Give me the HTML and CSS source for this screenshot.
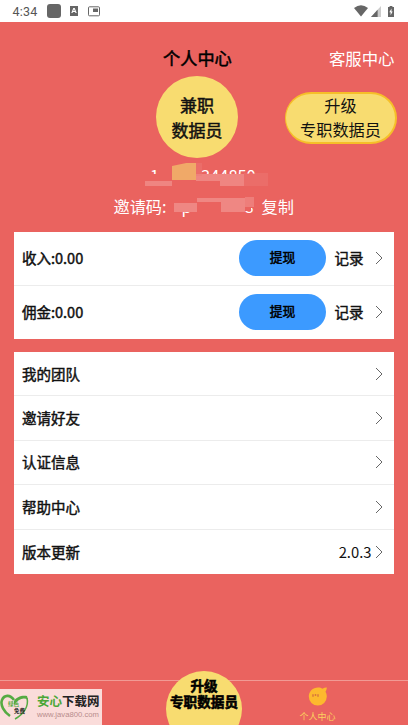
FILE: index.html
```html
<!DOCTYPE html>
<html lang="zh-CN">
<head>
<meta charset="utf-8">
<title>个人中心</title>
<link rel="stylesheet" href="styles.css">
</head>
<body>
<div class="app">
  <div class="status">
    <span class="clock">4:34</span>
    <span class="square"></span>
    <svg class="s-a" width="8" height="10" viewBox="0 0 8 10"><path fill="#666" fill-rule="evenodd" d="M0 0h8v10H0zM3.3 2L1.3 7h1.2l.4-1h2.200l.4 1h1.200l-2-5zM4 3.300l.7 1.700H3.300z"/></svg>
    <svg class="s-pip" width="12" height="11" viewBox="0 0 12 11"><rect x=".5" y=".8" width="11" height="9" rx="1" fill="none" stroke="#666"/><path fill="#666" d="M5 2.500h5v3.500H5z"/></svg>
    <span class="fill"></span>
    <svg width="14" height="12" viewBox="0 0 14 12"><path fill="#666" d="M0 3Q7-2.400 14 3L7 11.600z"/></svg>
    <svg class="s-sig" width="10" height="11" viewBox="0 0 10 11"><path fill="#ccc" d="M10 0v11H0z"/><path fill="#666" d="M6.600 3.700V11H0z"/></svg>
    <svg class="s-bat" width="6" height="11" viewBox="0 0 6 11"><path fill="#666" d="M1.600 0h2.800v1H6v10H0V1h1.600z"/><path fill="#fff" d="M3.500 2.500L1.300 6.300h1.300v3L4.700 5.400H3.500z"/></svg>
  </div>

  <header class="head">
    <h1>个人中心</h1>
    <a class="service">客服中心</a>
  </header>

  <section class="hero">
    <div class="role"><span>兼职</span><span>数据员</span></div>
    <div class="upgrade"><span>升级</span><span>专职数据员</span></div>
  </section>

  <div class="phone">
    <div class="digits"><span>1</span><span>344850</span></div>
    <svg class="mask" width="130" height="28" viewBox="0 0 130 28"><path fill="#ea635f" d="M5 11h120v15H5z"/><path fill="#ef8581" d="M5 18h27v5H5zM56 11h48v7H56zM80 17h24v6H80z"/><path fill="#ed7975" d="M56 0h6v13h-6zM104 10h24v13h-24z" opacity=".45"/><path fill="#f0a968" d="M32 3l19-4h5v18H32z"/></svg>
  </div>

  <div class="invite">
    <span>邀请码:</span>
    <div class="code">
      <span>p</span><span>8</span>
      <svg class="mask" width="90" height="24" viewBox="0 0 90 24"><path fill="#ea635f" d="M8 0h78v14H84v3H8z"/><path fill="#ef8783" d="M7 9h23v9H7zM30 4h50v4H30zM54 4h24v14H54z"/><path fill="#ee7e7a" d="M78 3h9v10h-9z"/></svg>
    </div>
    <span>复制</span>
  </div>

  <section class="card money">
    <div class="row"><b>收入:0.00</b><button>提现</button><b>记录</b><svg class="arrow" width="8" height="14" viewBox="0 0 8 14"><path d="M1 1l6 6-6 6"/></svg></div>
    <div class="row"><b>佣金:0.00</b><button>提现</button><b>记录</b><svg class="arrow" width="8" height="14" viewBox="0 0 8 14"><path d="M1 1l6 6-6 6"/></svg></div>
  </section>

  <section class="card menu">
    <div class="row"><b>我的团队</b><svg class="arrow" width="8" height="14" viewBox="0 0 8 14"><path d="M1 1l6 6-6 6"/></svg></div>
    <div class="row"><b>邀请好友</b><svg class="arrow" width="8" height="14" viewBox="0 0 8 14"><path d="M1 1l6 6-6 6"/></svg></div>
    <div class="row"><b>认证信息</b><svg class="arrow" width="8" height="14" viewBox="0 0 8 14"><path d="M1 1l6 6-6 6"/></svg></div>
    <div class="row"><b>帮助中心</b><svg class="arrow" width="8" height="14" viewBox="0 0 8 14"><path d="M1 1l6 6-6 6"/></svg></div>
    <div class="row"><b>版本更新</b><span class="version">2.0.3</span><svg class="arrow" width="8" height="14" viewBox="0 0 8 14"><path d="M1 1l6 6-6 6"/></svg></div>
  </section>

  <nav class="tabs">
    <div class="tab-up"><span>升级</span><span>专职数据员</span></div>
    <div class="tab-me">
      <svg width="20" height="19" viewBox="0 0 20 19"><path fill="#fdb92e" d="M10 .6c2 0 3.300.5 4.400 1.200C16 .8 17.500.4 18.800.5c0 1.700-.6 3.200-1.400 4.300 1 1.400 1.400 3 1.400 4.800a9 9 0 1 1-18 0C.8 4.500 4.900.6 10 .6z"/><path fill="none" stroke="#d9793b" stroke-width="1.500" d="M5 7.300v2.400M7.500 7v2M10 7.300v2.400"/></svg>
      <span>个人中心</span>
    </div>
    <div class="brand">
      <svg width="30" height="30" viewBox="0 0 30 30"><path fill="none" stroke="#55ab43" stroke-width="2.600" d="M10 24C4 20 0 13 2 8s8-6 12 0"/><path fill="#55ab43" d="M14 9c2-4 8-6 13-5l1 4c-4-3-10-1-14 5z"/><path fill="none" stroke="#55ab43" stroke-width="1.500" d="M27 6c2 8-3 16-12 21"/><text class="g1" x="8" y="14">绿色</text><text class="g2" x="14" y="21">免费</text></svg>
      <div class="brand-text"><div class="brand-name"><i>安心</i>下载网</div><div class="brand-url">www.java800.com</div></div>
    </div>
  </nav>
</div>
</body>
</html>
```
FILE: styles.css
```css
* { box-sizing: border-box; }
body { margin: 0; font-family: "Noto Sans CJK SC", sans-serif; color: #111; }
.app { width: 408px; height: 725px; background: #ea635f; display: flex; flex-direction: column; overflow: hidden; }
svg { display: block; flex: none; }

.status { height: 22px; flex: none; background: #fff; display: flex; align-items: center; padding: 0 14px 0 12.500px; }
.clock { font: 12.500px Roboto, sans-serif; color: #555; width: 34.500px; letter-spacing: .2px; }
.square { width: 14px; height: 14px; border-radius: 3px; background: #666; }
.s-a { margin-left: 9px; }
.s-pip { margin-left: 10px; }
.fill { flex: 1; }
.s-sig { margin-left: 3px; }
.s-bat { margin-left: 7px; }

.head { height: 54px; flex: none; display: grid; grid-template-columns: 163px 70px 1fr; align-items: center; padding: 18px 13.500px 0 0; }
.head h1 { grid-column: 2; margin: 0; font-size: 17.200px; line-height: 24px; font-weight: 400; color: #000; -webkit-text-stroke: .5px #000; }
.service { justify-self: end; font-size: 16.400px; line-height: 24px; color: #fff; }

.hero { height: 82px; flex: none; display: flex; padding-left: 156px; }
.role { width: 82px; height: 82px; border-radius: 50%; background: #f8dc70; display: flex; flex-direction: column; align-items: center; justify-content: center; font-size: 17px; line-height: 25px; -webkit-text-stroke: .5px #111; padding-bottom: 1px; }
.upgrade { width: 112px; height: 52px; margin: 16px 0 0 47px; border-radius: 26px; background: #f8dc70; border: 2px solid #f6bf28; border-left-width: 1px; display: flex; flex-direction: column; align-items: center; justify-content: center; font-size: 16.200px; line-height: 24px; padding-bottom: 2px; }

.phone { position: relative; height: 34px; flex: none; margin-left: 140px; padding-top: 3px; }
.digits { height: 28px; display: flex; color: #fff; font-size: 16.400px; line-height: 28px; padding-left: 10px; }
.digits span + span { margin-left: 42px; }
.mask { position: absolute; left: 0; top: 5px; }

.invite { height: 40px; flex: none; display: flex; padding: 2px 0 0 113.500px; color: #fff; font-size: 16.200px; line-height: 24px; }
.code { position: relative; width: 95px; padding-left: 15px; display: flex; gap: 53px; }
.code .mask { top: 0; left: 0; }

.card { flex: none; width: 380.500px; margin-left: 13.500px; background: #fff; }
.row { display: flex; align-items: center; padding: 0 11.500px 0 8.500px; border-bottom: 1px solid #ececec; }
.row:last-child { border-bottom: 0; }
.row b { font-size: 14.500px; line-height: 20px; font-weight: 400; -webkit-text-stroke: .45px #111; }
.row b:first-child { flex: 1; }
.money { height: 107px; margin-bottom: 13px; }
.money .row { height: 53.500px; }
.money .arrow { margin-left: 11px; }
.row button { width: 87px; height: 36px; margin-right: 9px; padding: 0 0 3px 1px; border: 0; border-radius: 18px; background: #3c9aff; font: 12.800px "Noto Sans CJK SC", sans-serif; color: #000; -webkit-text-stroke: .5px #000; }
.arrow { fill: none; stroke: #666; stroke-width: 1; }
.menu { height: 222px; }
.menu .row { height: 44.400px; }
.version { font-size: 14.800px; line-height: 20px; margin-right: 3px; }

.tabs { position: relative; height: 45px; flex: none; margin-top: auto; border-top: 1px solid #f19a94; }
.tab-up { position: absolute; left: 166px; top: -10px; width: 76px; height: 76px; border-radius: 50%; background: #f8dc70; display: flex; flex-direction: column; align-items: center; padding-top: 6px; font-size: 13.600px; line-height: 16px; font-weight: 700; color: #000; -webkit-text-stroke: .6px #000; }
.tab-me { margin-left: 299px; width: 37px; padding-top: 6px; display: flex; flex-direction: column; align-items: center; color: #fbd15e; font-size: 9px; line-height: 13px; white-space: nowrap; }
.tab-me span { margin-top: 4px; }
.brand { position: absolute; left: 0; top: 8px; width: 102px; height: 37px; background: #fadcda; display: flex; padding: 3px 0 0; }
.g1, .g2 { font-size: 5.500px; font-weight: 700; fill: #55ab43; }
.g2 { fill: #222; }
.brand-text { margin-left: 7px; }
.brand-name { font-size: 12.500px; line-height: 18px; font-weight: 700; color: #222; white-space: nowrap; }
.brand-name i { font-style: normal; color: #4aa737; }
.brand-url { font: 7.700px/8px "Liberation Sans", sans-serif; color: #b88c8c; white-space: nowrap; padding-top: 1px; }
```
